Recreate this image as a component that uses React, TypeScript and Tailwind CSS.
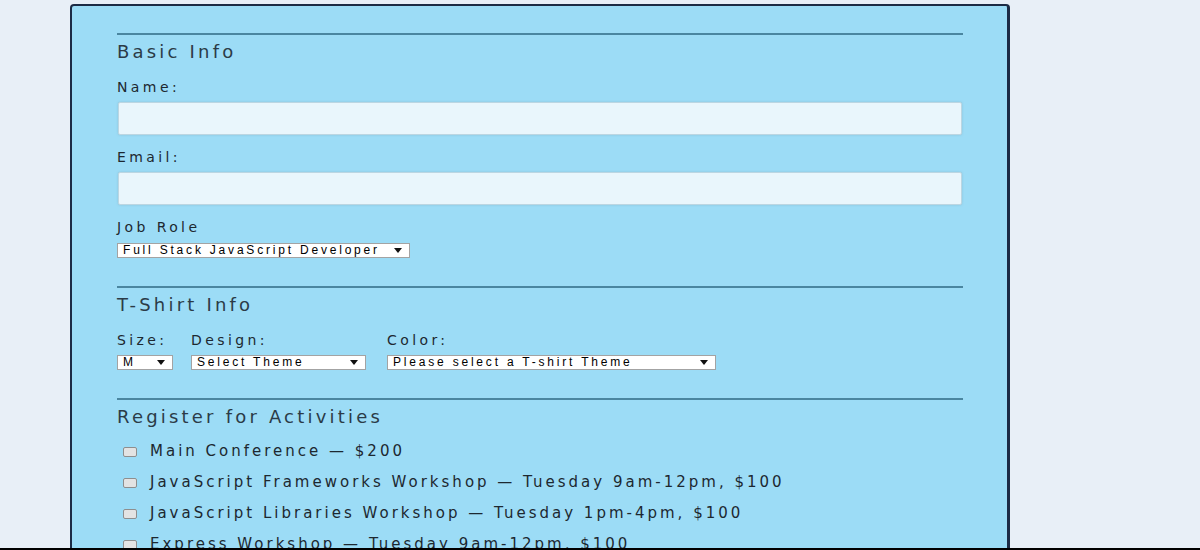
import React from 'react';

const activities = [
  'Main Conference — $200',
  'JavaScript Frameworks Workshop — Tuesday 9am-12pm, $100',
  'JavaScript Libraries Workshop — Tuesday 1pm-4pm, $100',
  'Express Workshop — Tuesday 9am-12pm, $100',
  'Node.js Workshop — Tuesday 1pm-4pm, $100',
];

const SelectBox: React.FC<{ value: string; width: string }> = ({ value, width }) => (
  <div className={`relative ${width}`}>
    <select
      defaultValue={value}
      className="block h-[15px] w-full appearance-none rounded-none border border-[#a3a3a3] bg-white pl-[5px] pr-[16px] font-['Liberation_Sans',Arial,sans-serif] text-[12px] leading-[13px] tracking-[2.8px] text-black outline-none"
    >
      <option>{value}</option>
    </select>
    <svg
      className="pointer-events-none absolute right-[8px] top-[5px]"
      width="8"
      height="5"
      viewBox="0 0 8 5"
    >
      <path d="M0 0h8L4 5z" fill="#111" />
    </svg>
  </div>
);

const Heading: React.FC<{ children: React.ReactNode }> = ({ children }) => (
  <h2 className="mt-[5px] text-[18px] leading-[24px] tracking-[3.2px] text-[#2b3b47]">{children}</h2>
);

const Label: React.FC<{ children: React.ReactNode }> = ({ children }) => (
  <label className="block text-[14px] leading-[20px] tracking-[3.4px] text-[#1d2830]">{children}</label>
);

const App: React.FC = () => {
  return (
    <div className="flex h-[550px] flex-col overflow-hidden bg-[#e8eff7] font-['DejaVu_Sans',sans-serif]">
      <div className="flex-1 overflow-hidden pl-[70px] pt-[4px]">
        <form className="w-[940px] rounded-t-[4px] border-2 border-r-[3px] border-b-0 border-[#1c2b45] bg-[#9cdcf6] pl-[45px] pr-[44px] pt-[27px]">
          {/* basic info */}
          <fieldset className="border-t-2 border-[#4a86a0]">
            <Heading>Basic Info</Heading>
            <div className="mt-[13px]">
              <Label>Name:</Label>
              <input
                type="text"
                className="mt-[5px] ml-[1px] block h-[33px] w-[844px] rounded-[2px] border border-[#bcd6e2] bg-[#e9f6fc] shadow-[0_0_2px_rgba(120,160,180,0.5)] outline-none"
              />
            </div>
            <div className="mt-[12px]">
              <Label>Email:</Label>
              <input
                type="email"
                className="mt-[5px] ml-[1px] block h-[33px] w-[844px] rounded-[2px] border border-[#bcd6e2] bg-[#e9f6fc] shadow-[0_0_2px_rgba(120,160,180,0.5)] outline-none"
              />
            </div>
            <div className="mt-[12px]">
              <Label>Job Role</Label>
              <div className="mt-[6px]">
                <SelectBox value="Full Stack JavaScript Developer" width="w-[293px]" />
              </div>
            </div>
          </fieldset>

          {/* t-shirt */}
          <fieldset className="mt-[28px] border-t-2 border-[#4a86a0]">
            <Heading>T-Shirt Info</Heading>
            <div className="mt-[13px] flex">
              <div className="w-[74px]">
                <Label>Size:</Label>
                <div className="mt-[5px]">
                  <SelectBox value="M" width="w-[56px]" />
                </div>
              </div>
              <div className="w-[196px]">
                <Label>Design:</Label>
                <div className="mt-[5px]">
                  <SelectBox value="Select Theme" width="w-[175px]" />
                </div>
              </div>
              <div>
                <Label>Color:</Label>
                <div className="mt-[5px]">
                  <SelectBox value="Please select a T-shirt Theme" width="w-[329px]" />
                </div>
              </div>
            </div>
          </fieldset>

          {/* activities */}
          <fieldset className="mt-[28px] border-t-2 border-[#4a86a0]">
            <Heading>Register for Activities</Heading>
            <div className="mt-[7px]">
              {activities.map((a) => (
                <label key={a} className="flex h-[31px] items-center">
                  <input
                    type="checkbox"
                    className="ml-[6px] h-[10px] w-[14px] appearance-none rounded-[2px] border border-[#8e8e8e] bg-[#e3e3e3]"
                  />
                  <span className="ml-[13px] text-[15px] tracking-[3px] text-[#1d2830]">{a}</span>
                </label>
              ))}
            </div>
          </fieldset>
        </form>
      </div>
      <div className="h-[2px] bg-black" />
    </div>
  );
};

export default App;
